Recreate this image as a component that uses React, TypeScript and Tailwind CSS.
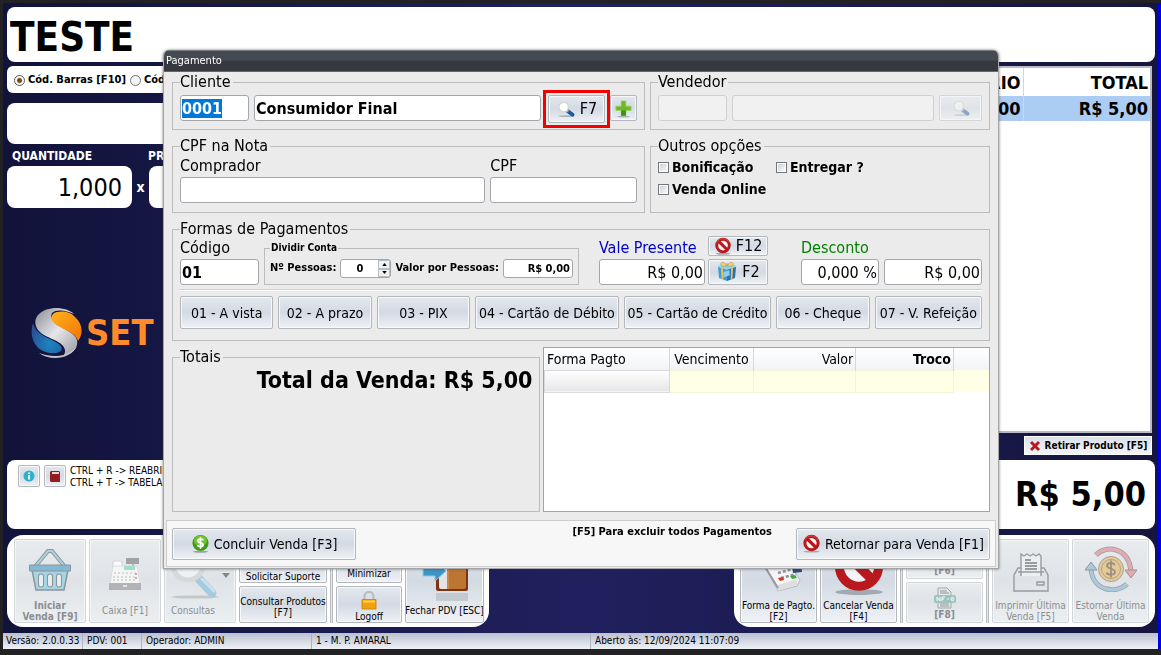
import { useEffect, useRef } from "react";
import type { ReactNode } from "react";

const face =
  "rounded-[2px] border border-[#b3b6bb] bg-linear-to-b from-[#e4e8ee] via-[#d3dae3] to-[#eff2f6] shadow-[inset_0_0_0_1px_#f6f8fa]";
const faded =
  "rounded-[2px] border border-[#d3d6d9] bg-linear-to-b from-[#e9ebee] via-[#dfe3e7] to-[#eceff1] shadow-[inset_0_0_0_1px_#f3f5f6]";
const field = "min-w-0 rounded-[3px] border border-[#a3a6aa] bg-white";

function Group({ title, className, children }: { title: string; className?: string; children: ReactNode }) {
  return (
    <fieldset className={`min-w-0 border border-[#bcbcbc] px-[7px] ${className ?? ""}`}>
      <legend className="pr-0.5 text-base leading-5">{title}</legend>
      {children}
    </fieldset>
  );
}

function Magnifier({ className }: { className?: string }) {
  return (
    <svg viewBox="0 0 20 18" className={className} aria-hidden="true">
      <ellipse cx="10" cy="16" rx="8.5" ry="1" fill="#aab2bd" />
      <path d="M11 10l6 4.5" stroke="#1b5a9c" strokeWidth="4" strokeLinecap="round" />
      <path d="M10.5 9.5l2 1.6" stroke="#7fb2e0" strokeWidth="3" />
      <circle cx="7.5" cy="6.5" r="5" fill="#fff" stroke="#d6d3cb" strokeWidth="1.4" />
    </svg>
  );
}

function Forbidden({ className }: { className?: string }) {
  return (
    <svg viewBox="0 0 20 20" className={className} aria-hidden="true">
      <ellipse cx="10" cy="18.6" rx="8.5" ry="1" fill="#a3a9b1" />
      <circle cx="10" cy="9.5" r="7" fill="#f4f4f6" stroke="#b9181c" strokeWidth="3.2" />
      <path d="M5.2 4.8l9.6 9.4" stroke="#b9181c" strokeWidth="3.4" />
      <path d="M3.2 6.5A7.4 7.4 0 0 1 16.8 6.5" stroke="#e0494a" strokeWidth="1" fill="none" />
    </svg>
  );
}

function Gift() {
  return (
    <svg viewBox="0 0 22 22" className="size-[22px]" aria-hidden="true">
      <path d="M2 6l9 2v12l-8-3z" fill="#3e9bdc" />
      <path d="M11 8l9-2-1 11-8 3z" fill="#2272b8" />
      <path d="M1 5l10-3 10 3-10 4z" fill="#8fd0f5" />
      <path d="M5 6.8l2 .5.4 11-1.8-.7zM15 7.2l2-.5-.6 11.4-1.7.6z" fill="#f0c34a" />
      <path d="M11 5C8 0 4 1 5 3.5S9 5 11 5zm0 0c3-5 7-4 6-1.5S13 5 11 5z" fill="#f6d467" stroke="#c58f1d" strokeWidth=".6" />
      <path d="M7.500 11l6-2v5.500l-6 2z" fill="#8fcdf2" />
    </svg>
  );
}

function Plus() {
  return (
    <svg viewBox="0 0 20 20" className="size-[19px]" aria-hidden="true">
      <ellipse cx="10" cy="18.5" rx="7" ry="1" fill="#a9b0b8" />
      <path d="M7.500 2h5v5.500H18v4.500h-5.500v5.500h-5V12H2V7.500h5.500z" fill="#6fb62a" stroke="#9fd35a" strokeWidth=".8" />
      <path d="M7.500 12h5v5.500h-5z" fill="#3f8d1d" />
    </svg>
  );
}

function Dollar() {
  return (
    <svg viewBox="0 0 20 20" className="size-[19px]" aria-hidden="true">
      <ellipse cx="10" cy="18.7" rx="8" ry="1" fill="#9aa1aa" />
      <circle cx="10" cy="9.5" r="8.5" fill="#3f9c19" />
      <ellipse cx="10" cy="7" rx="6.8" ry="5.4" fill="#83cc3c" opacity=".8" />
      <path d="M13 6.600C12.400 5.200 7.200 4.800 7.200 7.400c0 2.500 5.600 1.400 5.600 4 0 2.600-5.300 2.300-6 .5M10 3.500v12" fill="none" stroke="#fff" strokeWidth="1.8" />
    </svg>
  );
}

function Basket() {
  return (
    <svg viewBox="0 0 44 44" className="size-11" aria-hidden="true">
      <path d="M6 20L20 3h4l14 17" fill="none" stroke="#8d9499" strokeWidth="4" />
      <path d="M6 20L20 3h4l14 17" fill="none" stroke="#a9d3e2" strokeWidth="2" />
      <path d="M4 22h36l-4 20H8z" fill="#a5d5e4" stroke="#8d9499" strokeWidth="1.5" />
      <path d="M1.500 17h41v6h-41z" fill="#83b9d4" stroke="#8d9499" strokeWidth="1" />
      <path d="M13 28.500v8M22 28.500v8M31 28.500v8" stroke="#8d9499" strokeWidth="6" strokeLinecap="round" />
      <path d="M13 28.500v8M22 28.500v8M31 28.500v8" stroke="#e8eef0" strokeWidth="4" strokeLinecap="round" />
    </svg>
  );
}

function Register() {
  return (
    <svg viewBox="0 0 34 34" className="size-[34px]" aria-hidden="true">
      <path d="M18 1h13v6H18z" fill="#a0a3a5" />
      <path d="M24 7h2v5h-2z" fill="#b6b8ba" />
      <path d="M5 4h9v8H5z" fill="#fafafa" stroke="#d2d4d5" />
      <path d="M5 9h24l3 18H2z" fill="#f4f5f5" stroke="#d5d8d9" strokeWidth=".8" />
      <path d="M16 9h11v4H16z" fill="#a3dccd" />
      <path d="M6 16h22M5 20h24M5 23h24" stroke="#cdd0d2" strokeWidth="1.4" strokeDasharray="2 2" />
      <path d="M27 16h2v2h-2zM27 20h2v2h-2z" fill="#e0a3a3" />
      <path d="M1 26h32v7H1z" fill="#b1b3b4" />
      <path d="M15 29h4" stroke="#f3f3f3" strokeWidth="1.5" />
    </svg>
  );
}

function BigMagnifier() {
  return (
    <svg viewBox="0 0 52 52" className="size-[52px]" aria-hidden="true">
      <ellipse cx="25" cy="48" rx="24" ry="1.6" fill="#c3c7ca" />
      <path d="M29 30l13 14" stroke="#a6cbe0" strokeWidth="9" strokeLinecap="round" />
      <path d="M32 30l12 12" stroke="#c7e1ef" strokeWidth="3" strokeLinecap="round" />
      <circle cx="18" cy="16" r="15" fill="#eef1f3" stroke="#d6d8d9" strokeWidth="5" />
    </svg>
  );
}

function Lock() {
  return (
    <svg viewBox="0 0 18 20" className="h-5 w-[18px]" aria-hidden="true">
      <path d="M4.500 9V5.500a4.500 4.500 0 0 1 9 0V9" fill="none" stroke="#b8bcc0" strokeWidth="2.2" />
      <path d="M2 8.500h14V18H2z" fill="#f0a30c" stroke="#c97f05" strokeWidth=".8" />
      <path d="M3 9.500h12v2H3z" fill="#ffd04f" />
    </svg>
  );
}

function Door() {
  return (
    <svg viewBox="0 0 48 56" className="h-14 w-12" aria-hidden="true">
      <path d="M15 2h30q2 0 2 2v36q0 2-2 2H17q-2 0-2-2z" fill="#7d3413" />
      <path d="M18 4h8v36h-6q-2 0-2-2z" fill="#e4e4e6" />
      <path d="M26 2h19v36q0 2-2 2H26z" fill="#bd7632" />
      <path d="M27 2v38" stroke="#d79a58" />
      <path d="M2 16h12V9l11 13-11 10v-5H2z" fill="#3d94c6" stroke="#8fc9e8" />
      <path d="M15 44h32v8H15z" fill="#a9afb7" opacity=".5" />
    </svg>
  );
}

function Terminal() {
  return (
    <svg viewBox="0 0 48 48" className="size-12" aria-hidden="true">
      <path d="M8 18l22-6 15 24-3 6-19 5z" fill="#f5f5f6" stroke="#b4b6b9" />
      <path d="M23 41l19-6v6l-19 6z" fill="#dcdee0" />
      <path d="M20 24l15-4M23 29l15-4M26 34l15-4" stroke="#8d9298" strokeWidth="2.5" strokeDasharray="3 2" />
      <path d="M23 34l5-1 1 3-4 1z" fill="#d8322b" />
      <path d="M35 32l5-1 2 3-5 1z" fill="#3ba745" />
      <path d="M36 16l10 3 1 9-9 1z" fill="#294a7c" />
      <path d="M7 18l16 26" stroke="#9698a5" strokeWidth="2" />
    </svg>
  );
}

function Nfe() {
  return (
    <svg viewBox="0 0 24 22" className="h-[22px] w-6" aria-hidden="true">
      <path d="M5 1h9l4 4v16H5z" fill="#e3e7e8" stroke="#a1a7a9" />
      <path d="M7 4h7M7 6h9M7 17h9M7 19h9" stroke="#8f9698" />
      <rect x="1" y="8" width="22" height="8" rx="2" fill="#9cc3bf" />
      <path d="M4 14v-4l3 4v-4M9 14v-4h3M9 12h2M14 12h2M18 12h3c0-3-3.500-2-3 .5.300 1.500 2 1.500 3 1" fill="none" stroke="#f7fafa" />
    </svg>
  );
}

function Receipt() {
  return (
    <svg viewBox="0 0 36 40" className="h-10 w-9" fill="none" stroke="#989c9f" strokeWidth="1.4" aria-hidden="true">
      <path d="M8 24V2l3 2 3-2 3 2 3-2 3 2 3-2 2 2v20" fill="#eceeef" />
      <path d="M8 16H5l-4 7v16h34V23l-4-7h-3" />
      <path d="M5 20h26" />
      <path d="M12 8h6M12 11h12M12 14h12M12 17h12" strokeWidth="1.8" />
      <path d="M24 30h7v3h-7z" />
    </svg>
  );
}

function Refund() {
  return (
    <svg viewBox="0 0 52 46" className="h-[46px] w-[52px]" fill="none" aria-hidden="true">
      <circle cx="26" cy="23" r="12.5" fill="#e5ca98" stroke="#a9a08f" />
      <circle cx="26" cy="23" r="9.5" stroke="#b3a284" />
      <path d="M30 19c-1.500-3-8-2.500-8 .5 0 4 8 2.500 8 6.500 0 3.500-7 3.500-8.500.5M26 14.500v17" stroke="#9b9181" strokeWidth="1.8" />
      <path d="M11 9C20-1 44 0 46 26" stroke="#999fa3" strokeWidth="5" />
      <path d="M11 9C20-1 44 0 46 26" stroke="#e3abb0" strokeWidth="3.5" />
      <path d="M40 24h12l-6 8z" fill="#e3abb0" stroke="#a18f92" />
      <path d="M42 38C32 48 7 46 6 22" stroke="#999fa3" strokeWidth="5" />
      <path d="M42 38C32 48 7 46 6 22" stroke="#acc9dc" strokeWidth="3.5" />
      <path d="M0 24h12l-6-8z" fill="#acc9dc" stroke="#8b989f" />
    </svg>
  );
}

function Logo() {
  return (
    <svg viewBox="0 0 52 52" className="size-[52px]" aria-hidden="true">
      <defs>
        <linearGradient id="lg-orange" x1="0" y1="0" x2="1" y2="1">
          <stop offset="0" stopColor="#ffb01c" />
          <stop offset="1" stopColor="#f27405" />
        </linearGradient>
        <radialGradient id="lg-blue" cx=".6" cy=".7" r=".7">
          <stop offset="0" stopColor="#1b86c2" />
          <stop offset="1" stopColor="#2b4f94" />
        </radialGradient>
        <linearGradient id="lg-silver" x1="0" y1="0" x2="1" y2="1">
          <stop offset="0" stopColor="#8b8d94" />
          <stop offset=".5" stopColor="#e6e6ea" />
          <stop offset="1" stopColor="#97989f" />
        </linearGradient>
      </defs>
      <path d="M44 7C36 0 18-2 8 8 3 14 5 23 14 28c9 5 22 8 21 17-.5 2-1 3-2 4 8-1 16-8 14-16-2-7-12-10-19-15-6-4-8-8-6-12C26 2 36 3 44 7z" fill="url(#lg-silver)" />
      <path d="M9 46c11 8 31 7 38-7-5 6-12 10-21 10-6 0-12-1-17-3z" fill="#c2c3c9" />
      <path d="M45 10C40 4 28 3 23 7c-4 5 0 9 7 13 8 4 16 7 18 14C54 26 52 16 45 10z" fill="url(#lg-orange)" />
      <path d="M3 16c-4 12 1 24 10 28 7 3 14 3 18 0 3-5-3-8-11-12C11 28 5 24 3 16z" fill="url(#lg-blue)" />
    </svg>
  );
}

type ToolProps = { label: ReactNode; icon?: ReactNode; off?: boolean; className?: string };

function Tool({ label, icon, off, className }: ToolProps) {
  return (
    <button
      type="button"
      disabled={off}
      className={`flex flex-col items-center justify-end overflow-hidden text-center text-[10px] leading-[11px] ${
        off ? `${faded} text-[#8b8e91]` : face
      } ${className ?? ""}`}
    >
      {icon}
      <span>{label}</span>
    </button>
  );
}

function Separator() {
  return <div className="w-[3px] border-x border-[#b9bcc0] bg-[#e4e6e9]" />;
}

function Check({ label }: { label: string }) {
  return (
    <label className="flex items-center gap-[3px] text-sm leading-[22px] font-bold">
      <input
        type="checkbox"
        className="size-[11px] appearance-none border border-[#73767a] bg-linear-to-br from-[#c9ccd0] to-white shadow-[inset_0_0_0_1px_white] checked:bg-[#335577]"
      />
      {label}
    </label>
  );
}

function Dialog() {
  const code = useRef<HTMLInputElement>(null);
  useEffect(() => {
    code.current?.focus();
    code.current?.select();
  }, []);

  return (
    <div
      role="dialog"
      aria-label="Pagamento"
      className="w-full overflow-hidden rounded-t-md border-x border-b border-[#a4a5a8] bg-[#ebebeb] shadow-[0_0_3px_#333a]"
    >
      <h1 className="h-[22px] border-t border-b border-t-[#777b81] border-b-[#6c6368] bg-linear-to-b from-[#454a52] from-45% to-[#35383e] to-50% px-0.5 text-[11px] leading-5 text-white">
        Pagamento
      </h1>

      <div className="flex flex-col gap-1.5 px-2">
        <div className="grid grid-cols-[473fr_340fr] gap-[5px]">
          <Group title="Cliente">
            <div className="flex h-[37px] items-start pt-[3px]">
              <input
                ref={code}
                aria-label="Código do cliente"
                defaultValue="0001"
                className={`${field} h-[26px] w-[69px] px-px text-base font-bold outline-none selection:bg-[#0078d7] selection:text-white`}
              />
              <input
                aria-label="Nome do cliente"
                defaultValue="Consumidor Final"
                className={`${field} ml-[5px] h-[26px] flex-1 px-px text-base font-bold`}
              />
              <div className="-mt-[5px] ml-0.5 border-[3px] border-[#f40000] p-0.5">
                <button type="button" className={`${face} flex h-7 w-[57px] items-center justify-center gap-1 text-base`}>
                  <Magnifier className="h-[17px] w-5" />
                  F7
                </button>
              </div>
              <button type="button" aria-label="Novo cliente" className={`${face} flex h-[26px] w-[27px] items-center justify-center`}>
                <Plus />
              </button>
            </div>
          </Group>
          <Group title="Vendedor">
            <div className="flex h-[37px] items-start gap-[5px] pt-[3px]">
              <input aria-label="Código do vendedor" disabled className="h-[26px] w-[69px] rounded-[3px] border border-[#cfd0d2] bg-[#f1f1f2]" />
              <input aria-label="Nome do vendedor" disabled className="h-[26px] min-w-0 flex-1 rounded-[3px] border border-[#cfd0d2] bg-[#f1f1f2]" />
              <button type="button" aria-label="Buscar vendedor" disabled className={`${faded} flex h-[26px] w-[43px] items-center justify-center`}>
                <Magnifier className="h-[17px] w-5 opacity-45" />
              </button>
            </div>
          </Group>
        </div>

        <div className="grid grid-cols-[473fr_340fr] gap-[5px]">
          <Group title="CPF na Nota">
            <div className="grid h-14 grid-cols-[306fr_147fr] gap-[5px]">
              <label className="flex min-w-0 flex-col text-base leading-5">
                Comprador
                <input className={`${field} mt-px h-[26px]`} />
              </label>
              <label className="flex min-w-0 flex-col text-base leading-5">
                CPF
                <input className={`${field} mt-px h-[26px]`} />
              </label>
            </div>
          </Group>
          <Group title="Outros opções">
            <div className="grid h-14 grid-cols-[118px_1fr] content-start">
              <Check label="Bonificação" />
              <Check label="Entregar ?" />
              <Check label="Venda Online" />
            </div>
          </Group>
        </div>

        <Group title="Formas de Pagamentos">
          <div className="-mt-[3px] flex items-end">
            <label className="flex w-[79px] shrink-0 flex-col text-base leading-5">
              Código
              <input defaultValue="01" className={`${field} mt-px h-[26px] px-px font-bold`} />
            </label>
            <fieldset className="ml-[5px] min-w-0 flex-1 border border-[#bcbcbc] px-[5px] text-[11px] font-bold">
              <legend className="px-px text-[10px] leading-[14px]">Dividir Conta</legend>
              <div className="flex h-[29px] items-start gap-1 pt-1 leading-[18px] whitespace-nowrap">
                <label htmlFor="people">Nº Pessoas:</label>
                <div className={`${field} flex h-[19px] w-[51px] shrink-0`}>
                  <input id="people" defaultValue="0" className="w-[37px] text-center" />
                  <div className="flex flex-1 flex-col">
                    <button type="button" aria-label="Mais" className="flex flex-1 items-center justify-center border border-[#b9bcc0] bg-[#f0f1f3]">
                      <svg viewBox="0 0 6 4" className="h-[3px] w-[5px]"><path d="M0 4l3-4 3 4z" /></svg>
                    </button>
                    <button type="button" aria-label="Menos" className="flex flex-1 items-center justify-center border border-[#b9bcc0] bg-[#f0f1f3]">
                      <svg viewBox="0 0 6 4" className="h-[3px] w-[5px]"><path d="M0 0l3 4 3-4z" /></svg>
                    </button>
                  </div>
                </div>
                <label htmlFor="share">Valor por Pessoas:</label>
                <input id="share" defaultValue="R$ 0,00" className={`${field} h-[19px] flex-1 px-0.5 text-right`} />
              </div>
            </fieldset>
            <label className="ml-5 flex w-[106px] shrink-0 flex-col text-base leading-5 text-[#0000c8]">
              Vale Presente
              <input defaultValue="R$ 0,00" className={`${field} mt-px h-[26px] px-px text-right text-black`} />
            </label>
            <div className="ml-[3px] flex w-[60px] shrink-0 flex-col gap-[3px] text-base">
              <button type="button" className={`${face} flex h-5 items-center justify-center gap-1`}>
                <Forbidden className="size-[18px]" />
                F12
              </button>
              <button type="button" className={`${face} flex h-[26px] items-center justify-center gap-1`}>
                <Gift />
                F2
              </button>
            </div>
            <label className="ml-[33px] flex w-[78px] shrink-0 flex-col text-base leading-5 text-[#008000]">
              Desconto
              <input defaultValue="0,000 %" className={`${field} mt-px h-[26px] px-px text-right text-black`} />
            </label>
            <input aria-label="Desconto em reais" defaultValue="R$ 0,00" className={`${field} ml-[5px] h-[26px] w-[98px] shrink-0 px-px text-right text-base`} />
          </div>
          <hr className="mt-1 h-[2px] border-t border-b border-t-[#cfcfcf] border-b-white" />
          <div className="mt-[5px] mb-[11px] grid grid-cols-[93fr_93fr_93fr_143fr_147fr_93fr_107fr] gap-[5px] text-sm whitespace-nowrap">
            {["01 - A vista", "02 - A prazo", "03 - PIX", "04 - Cartão de Débito", "05 - Cartão de Crédito", "06 - Cheque", "07 - V. Refeição"].map((name) => (
              <button key={name} type="button" className={`${face} h-[33px]`}>
                {name}
              </button>
            ))}
          </div>
        </Group>

        <div className="grid h-[165px] grid-cols-[368fr_446fr] gap-[3px]">
          <Group title="Totais">
            <output className="block text-right text-[23px] leading-[26px] font-bold">Total da Venda: R$ 5,00</output>
          </Group>
          <div className="border border-[#8fa8bd] bg-white">
            <table className="w-full table-fixed border-collapse text-sm">
              <colgroup>
                <col className="w-[28%]" />
                <col className="w-[19%]" />
                <col className="w-[23%]" />
                <col className="w-[22%]" />
                <col />
              </colgroup>
              <thead>
                <tr className="h-[22px] bg-linear-to-b from-white to-[#f1f3f5]">
                  <th className="border-r border-[#d6d9dc] px-0.5 text-left font-normal">Forma Pagto</th>
                  <th className="border-r border-[#d6d9dc] text-center font-normal">Vencimento</th>
                  <th className="border-r border-[#d6d9dc] px-0.5 text-right font-normal">Valor</th>
                  <th className="border-r border-[#d6d9dc] px-0.5 text-right">Troco</th>
                  <th />
                </tr>
              </thead>
              <tbody>
                <tr className="h-[22px] bg-[#ffffe5]">
                  <td className="border border-[#d9dadd] bg-linear-to-b from-white to-[#e6e6e8]" />
                  <td className="border border-[#f3f3dc]" />
                  <td className="border border-[#f3f3dc]" />
                  <td className="border border-[#f3f3dc]" />
                  <td />
                </tr>
              </tbody>
            </table>
          </div>
        </div>
      </div>

      <div className="mx-0.5 mt-2 mb-px flex h-[47px] items-center justify-between border border-[#cdcdcd] bg-[#f7f7f7] px-[5px]">
        <button type="button" className={`${face} flex h-8 w-[184px] items-center justify-center gap-1 text-sm whitespace-nowrap`}>
          <Dollar />
          Concluir Venda [F3]
        </button>
        <div className="flex items-center gap-6">
          <p className="pb-6 text-[11px] leading-4 font-bold">[F5] Para excluir todos Pagamentos</p>
          <button type="button" className={`${face} flex h-8 w-[194px] items-center justify-center gap-1 text-sm whitespace-nowrap`}>
            <Forbidden className="size-[19px]" />
            Retornar para Venda [F1]
          </button>
        </div>
      </div>
    </div>
  );
}

export default function App() {
  return (
    <div className="flex min-h-screen flex-col border-t-[3px] border-b-[6px] border-l-[3px] border-[#222124] bg-linear-to-r from-[#11133a] via-[#20205e] to-[#15153f] font-['DejaVu_Sans_Condensed','DejaVu_Sans',sans-serif] text-black">
      <div className="flex flex-1 flex-col border-r-[3px] border-[#0000e6]">
        <main className="flex flex-1 flex-col pt-1 pr-[3px] pl-1">
          <header className="flex h-[55px] items-center rounded-lg bg-white px-[3px] pt-1 text-[40px] leading-none font-bold">TESTE</header>

          <div className="mt-1 flex flex-1 gap-4">
            <section className="w-[480px]">
              <div className="flex h-[27px] items-center rounded-md bg-white px-[7px] pt-0.5 text-[11px] font-bold">
                <label className="flex items-center gap-[3px]">
                  <input type="radio" name="mode" defaultChecked className="size-[11px] appearance-none rounded-full border border-[#55585c] bg-[radial-gradient(#7a4a12_0_30%,#fff_50%)]" />
                  Cód. Barras [F10]
                </label>
                <label className="ml-1 flex items-center gap-[3px]">
                  <input type="radio" name="mode" className="size-[11px] appearance-none rounded-full border border-[#77797d] bg-[#f4f4f4]" />
                  Cód.
                </label>
              </div>
              <input aria-label="Produto" className="mt-2.5 block h-[41px] w-full rounded-lg bg-white" />
              <div className="mt-[3px] mb-px flex text-xs leading-[18px] font-bold text-white">
                <label htmlFor="qty" className="w-[141px] pl-[5px]">QUANTIDADE</label>
                <label htmlFor="price">PR</label>
              </div>
              <div className="flex items-center">
                <input id="qty" defaultValue="1,000" className="h-[42px] w-[125px] rounded-lg bg-white px-2.5 text-right text-[25px]" />
                <span className="w-[17px] text-center text-sm font-bold text-white">x</span>
                <input id="price" className="h-[42px] w-[125px] rounded-lg bg-white" />
              </div>
              <div className="mt-[99px] flex items-center gap-1 pl-[23px]">
                <Logo />
                <div className="text-4xl leading-none font-bold text-[#ff8a2a]">
                  SET <span className="text-[#b9bac2]">S</span>
                </div>
              </div>
            </section>

            <section className="flex flex-1 flex-col pr-[3px]">
              <div className="flex-1 border-2 border-[#b9bac4] bg-white">
                <table className="w-full border-collapse text-right text-lg leading-6 font-bold">
                  <thead>
                    <tr className="h-7">
                      <th className="border-r border-[#d4d6da] px-0.5 pt-0.5">UNITÁRIO</th>
                      <th className="w-[127px] px-0.5 pt-0.5">TOTAL</th>
                    </tr>
                  </thead>
                  <tbody>
                    <tr className="h-[25px] bg-[#abcdf3]">
                      <td className="border-r border-[#d4d6da] px-0.5">R$ 5,00</td>
                      <td className="px-0.5">R$ 5,00</td>
                    </tr>
                  </tbody>
                </table>
              </div>
              <button type="button" className="mt-[3px] mb-[3px] flex h-[19px] w-[128px] items-center justify-center gap-1 self-end border border-white bg-linear-to-b from-[#dce1e9] to-[#f1f3f6] text-[10px] font-bold whitespace-nowrap">
                <svg viewBox="0 0 12 12" className="size-3" aria-hidden="true">
                  <path d="M2 2l8 8M10 2l-8 8" stroke="#b51d1d" strokeWidth="3" />
                </svg>
                Retirar Produto [F5]
              </button>
            </section>
          </div>

          <div className="mt-0.5 flex h-[69px] items-start rounded-lg bg-white">
            <div className="flex items-start gap-1 pt-[5px] pl-[11px]">
              <button type="button" aria-label="Informações" className={`${face} flex size-[22px] items-center justify-center`}>
                <svg viewBox="0 0 12 12" className="size-3" aria-hidden="true">
                  <circle cx="6" cy="6" r="5.5" fill="#2fb1c9" />
                  <path d="M6 5v4.500M6 2.500v1.500" stroke="#fff" strokeWidth="1.8" />
                </svg>
              </button>
              <button type="button" aria-label="Tabela" className={`${face} flex size-[22px] items-center justify-center`}>
                <svg viewBox="0 0 12 14" className="h-3.5 w-3" aria-hidden="true">
                  <path d="M2 2h8l1 1v10H2L1 12V3z" fill="#941b20" />
                  <path d="M3 3h7v2H3z" fill="#e6d3d3" />
                </svg>
              </button>
              <p className="text-[10px] leading-3">
                CTRL + R -&gt; REABRIR
                <br />
                CTRL + T -&gt; TABELA DE
              </p>
            </div>
            <output className="ml-auto self-center pr-[9px] text-[34px] font-bold">R$ 5,00</output>
          </div>

          <div className="mt-1.5 mb-1.5 flex h-[92px] justify-between">
            <nav className="flex gap-[3px] rounded-2xl bg-white px-[5px] py-1 pl-[7px]">
              <Tool off icon={<Basket />} label={<>Iniciar<br />Venda [F9]</>} className="w-[72px] gap-2 font-bold" />
              <Tool off icon={<Register />} label="Caixa [F1]" className="w-[72px] gap-3.5 pb-1.5" />
              <Tool
                off
                icon={
                  <span className="flex items-center">
                    <BigMagnifier />
                    <svg viewBox="0 0 8 5" className="h-[5px] w-2" fill="#85888b"><path d="M0 0h8L4 5z" /></svg>
                  </span>
                }
                label={<span className="pr-3.5">Consultas</span>}
                className="w-[72px] gap-1 pb-1.5"
              />
              <div className="flex w-[88px] flex-col gap-[3px]">
                <Tool label="Solicitar Suporte" className="h-11" />
                <Tool label={<>Consultar Produtos<br />[F7]</>} className="flex-1 justify-center pb-1 whitespace-nowrap" />
              </div>
              <Separator />
              <div className="flex w-[66px] flex-col gap-[3px]">
                <Tool label="Minimizar" className="h-11 pb-[3px]" />
                <Tool icon={<Lock />} label="Logoff" className="flex-1" />
              </div>
              <Tool icon={<Door />} label="Fechar PDV [ESC]" className="w-[79px] pb-1.5 whitespace-nowrap" />
            </nav>
            <nav className="flex gap-[3px] rounded-2xl bg-white px-1.5 py-1">
              <Tool icon={<Terminal />} label={<>Forma de Pagto.<br />[F2]</>} className="w-[77px] gap-2 whitespace-nowrap" />
              <Tool icon={<Forbidden className="size-14" />} label={<>Cancelar Venda<br />[F4]</>} className="w-[77px] gap-1" />
              <Separator />
              <div className="flex w-[77px] flex-col gap-[3px] font-bold">
                <Tool off label="[F6]" className="h-10 pb-0.5" />
                <Tool off icon={<Nfe />} label="[F8]" className="flex-1 pb-0.5" />
              </div>
              <Separator />
              <Tool off icon={<Receipt />} label={<>Imprimir Última<br />Venda [F5]</>} className="w-[77px] gap-2" />
              <Tool off icon={<Refund />} label={<>Estornar Última<br />Venda</>} className="w-[77px] gap-2" />
            </nav>
          </div>
        </main>

        <footer className="flex h-4 bg-linear-to-b from-[#b9c0d0] to-[#eef1f6] text-[10px] leading-4">
          <span className="w-20 border-r border-[#aeb4c0] pl-[3px]">Versão: 2.0.0.33</span>
          <span className="w-[59px] border-r border-[#aeb4c0] pl-1">PDV: 001</span>
          <span className="w-[170px] border-r border-[#aeb4c0] pl-1">Operador: ADMIN</span>
          <span className="w-[279px] border-r border-[#aeb4c0] pl-1">1 - M. P. AMARAL</span>
          <span className="pl-1">Aberto às: 12/09/2024 11:07:09</span>
        </footer>
      </div>

      <div className="fixed inset-0 flex items-start pt-[50px] pr-[162px] pl-[163px]">
        <Dialog />
      </div>
    </div>
  );
}
